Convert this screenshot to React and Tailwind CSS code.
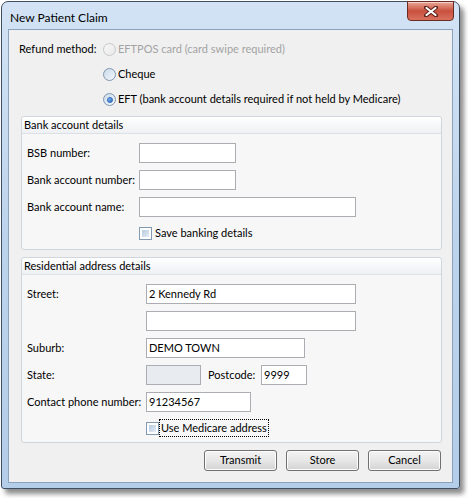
import React from 'react';

const font = { fontFamily: 'Lato, "Noto Sans", sans-serif' };

const Radio = ({ checked, disabled }) => (
  <span
    className={`relative w-[13px] h-[13px] rounded-full border flex items-center justify-center shrink-0 ${
      disabled
        ? 'border-[#c5c8cc] bg-gradient-to-br from-[#f7f7f7] to-[#e9e9e9]'
        : 'border-[#7f95ad] bg-gradient-to-br from-[#c9d9ea] to-[#f4f8fc]'
    }`}
  >
    {checked && (
      <span className="w-[6px] h-[6px] rounded-full bg-gradient-to-br from-[#8ec1f3] to-[#2a6cc8] border border-[#2d62ad]" />
    )}
  </span>
);

const Checkbox = () => (
  <span className="w-[13px] h-[13px] border border-[#8299b2] bg-white p-[2px] shrink-0 flex">
    <span className="flex-1 bg-gradient-to-br from-[#b7cbe0] to-[#e4edf6]" />
  </span>
);

const Input = ({ w, value, grey }) => (
  <div
    className={`${w} h-[20px] border border-[#abadb3] flex items-center pl-[2px] text-black whitespace-nowrap ${
      grey ? 'bg-[#e8ebf0]' : 'bg-white'
    }`}
  >
    {value}
  </div>
);

const Row = ({ label, lw, children }) => (
  <div className="flex items-center h-[20px]">
    <span className={`${lw} shrink-0 whitespace-nowrap`}>{label}</span>
    {children}
  </div>
);

const GroupBox = ({ title, children, className }) => (
  <div className={`w-[421px] ml-[12px] border border-[#cfd6dd] rounded-[3px] bg-[#f7f7f7] ${className}`}>
    <div className="h-[17px] pl-[2px] flex items-center bg-gradient-to-b from-white to-[#eef0f3] border-b border-[#dce1e6] rounded-t-[3px]">
      {title}
    </div>
    {children}
  </div>
);

const Button = ({ children }) => (
  <button className="w-[73px] h-[21px] rounded-[3px] border border-[#707070] bg-gradient-to-b from-[#f3f3f3] via-[#e7e7e7] to-[#d3d3d3] text-black flex items-center justify-center shadow-[inset_0_0_0_1px_#fcfcfc]">
    {children}
  </button>
);

export default function App() {
  return (
    <div className="w-[468px] h-[498px] bg-white pt-px pl-px text-[11px] text-black" style={font}>
      <div className="w-[459px] h-[488px] rounded-t-[7px] rounded-b-[3px] border border-[#3e4f63] bg-gradient-to-b from-[#d3e3f5] via-[#bcd3ec] to-[#b4cde8] shadow-[4px_5px_5px_rgba(0,0,0,0.45)] flex flex-col">
        <div className="h-[27px] shrink-0 flex items-start justify-between">
          <span className="pl-[8px] pt-[7px] text-[12px] text-black">New Patient Claim</span>
          <div className="mr-[5px] -mt-px w-[47px] h-[20px] rounded-b-[4px] border border-[#6a2b22] bg-gradient-to-b from-[#e8a697] via-[#c9503e] to-[#d9715e] shadow-[inset_0_1px_0_rgba(255,255,255,0.5)] flex items-center justify-center">
            <svg width="14" height="11" viewBox="0 0 14 11">
              <path d="M2 1.5 L12 9.5 M12 1.5 L2 9.5" stroke="#5a2018" strokeWidth="4" strokeLinecap="round" />
              <path d="M2.5 2 L11.5 9 M11.5 2 L2.5 9" stroke="#ffffff" strokeWidth="2.2" strokeLinecap="round" />
            </svg>
          </div>
        </div>
        <div className="flex-1 mx-[6px] mb-[5px] border border-[#8aa2bb] bg-[#f0f0f0] flex flex-col">
          {/* refund method */}
          <div className="pt-[7px] pl-[10px]">
            <div className="flex items-center h-[25px]">
              <span className="w-[84px] shrink-0 whitespace-nowrap">Refund method:</span>
              <Radio disabled />
              <span className="ml-[2px] text-[#a3a3a3] whitespace-nowrap">EFTPOS card (card swipe required)</span>
            </div>
            <div className="flex items-center h-[25px] pl-[84px]">
              <Radio />
              <span className="ml-[2px]">Cheque</span>
            </div>
            <div className="flex items-center h-[25px] pl-[84px]">
              <Radio checked />
              <span className="ml-[2px] whitespace-nowrap">EFT (bank account details required if not held by Medicare)</span>
            </div>
          </div>

          <GroupBox title="Bank account details" className="mt-[4px]">
            <div className="pl-[5px] pt-[9px] pb-[7px] flex flex-col gap-[7px]">
              <Row label="BSB number:" lw="w-[112px]">
                <Input w="w-[97px]" />
              </Row>
              <Row label="Bank account number:" lw="w-[112px]">
                <Input w="w-[97px]" />
              </Row>
              <Row label="Bank account name:" lw="w-[112px]">
                <Input w="w-[217px]" />
              </Row>
              <div className="flex items-center h-[18px] pl-[112px]">
                <Checkbox />
                <span className="ml-[3px]">Save banking details</span>
              </div>
            </div>
          </GroupBox>

          <GroupBox title="Residential address details" className="mt-[7px]">
            <div className="pl-[5px] pt-[9px] pb-[5px] flex flex-col gap-[7px]">
              <Row label="Street:" lw="w-[119px]">
                <Input w="w-[210px]" value="2 Kennedy Rd" />
              </Row>
              <Row label="" lw="w-[119px]">
                <Input w="w-[210px]" />
              </Row>
              <Row label="Suburb:" lw="w-[119px]">
                <Input w="w-[159px]" value="DEMO TOWN" />
              </Row>
              <Row label="State:" lw="w-[119px]">
                <Input w="w-[55px]" grey />
                <span className="ml-[7px] w-[53px] whitespace-nowrap">Postcode:</span>
                <Input w="w-[46px]" value="9999" />
              </Row>
              <Row label="Contact phone number:" lw="w-[119px]">
                <Input w="w-[105px]" value="91234567" />
              </Row>
              <div className="flex items-center h-[18px] pl-[119px]">
                <Checkbox />
                <span className="ml-[1px] px-[1px] outline outline-1 outline-dotted outline-black leading-[16px] whitespace-nowrap">
                  Use Medicare address
                </span>
              </div>
            </div>
          </GroupBox>

          <div className="w-[421px] ml-[12px] mt-[7px] pr-[1px] flex justify-end gap-[9px]">
            <Button>Transmit</Button>
            <Button>Store</Button>
            <Button>Cancel</Button>
          </div>
        </div>
      </div>
    </div>
  );
}
